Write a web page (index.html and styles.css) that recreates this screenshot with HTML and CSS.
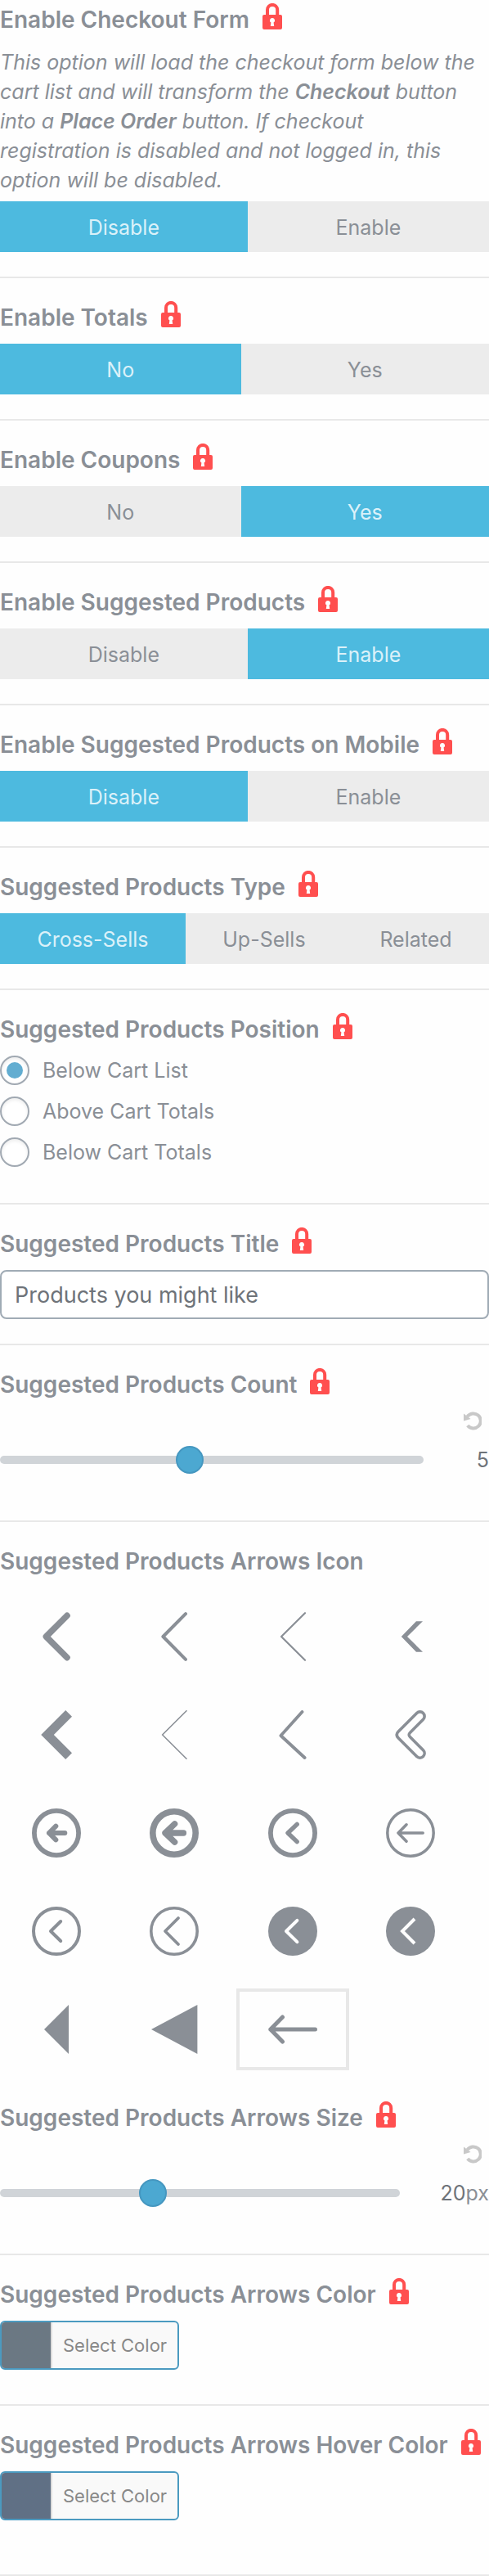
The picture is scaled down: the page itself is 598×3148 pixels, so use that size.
FILE: index.html
```
<!DOCTYPE html>
<html lang="en">
<head>
<meta charset="utf-8">
<meta name="viewport" content="width=device-width, initial-scale=1">
<title>Cart options</title>
<link rel="stylesheet" href="styles.css">
</head>
<body>
<svg class="sprite" aria-hidden="true">
  <symbol id="lock" viewBox="0 0 24 32">
    <path d="M6 15V8a6.1 6.1 0 0 1 12.2 0v7" fill="none" stroke="currentColor" stroke-width="4"/>
    <path fill="currentColor" fill-rule="evenodd" d="M2 14h20a2 2 0 0 1 2 2v14a2 2 0 0 1-2 2H2a2 2 0 0 1-2-2V16a2 2 0 0 1 2-2zM12 18a3 3 0 0 0-1.6 5.6L9.8 28h4.4l-.6-4.4A3 3 0 0 0 12 18z"/>
  </symbol>
  <symbol id="reset" viewBox="0 0 22 24">
    <path d="M4.5 7.2A9 9 0 1 1 4.8 18" fill="none" stroke="currentColor" stroke-width="4"/>
    <path d="M0 3.5V12.4L8.6 10Z" fill="currentColor"/>
  </symbol>
</svg>
<main class="options">
  <section class="option option--first">
    <h2 class="option__title">Enable Checkout Form <svg class="lock"><use href="#lock"/></svg></h2>
    <p class="option__desc">This option will load the checkout form below the cart list and will transform the <strong>Checkout</strong> button into a <strong>Place Order</strong> button. If checkout registration is disabled and not logged in, this option will be disabled.</p>
    <div class="segments" role="group" aria-label="Enable Checkout Form">
      <button class="segment segment--on" type="button" aria-pressed="true">Disable</button>
      <button class="segment" type="button" aria-pressed="false">Enable</button>
    </div>
  </section>

  <section class="option">
    <h2 class="option__title">Enable Totals <svg class="lock"><use href="#lock"/></svg></h2>
    <div class="segments" role="group" aria-label="Enable Totals">
      <button class="segment segment--on" type="button" aria-pressed="true">No</button>
      <button class="segment" type="button" aria-pressed="false">Yes</button>
    </div>
  </section>

  <section class="option">
    <h2 class="option__title">Enable Coupons <svg class="lock"><use href="#lock"/></svg></h2>
    <div class="segments" role="group" aria-label="Enable Coupons">
      <button class="segment" type="button" aria-pressed="false">No</button>
      <button class="segment segment--on" type="button" aria-pressed="true">Yes</button>
    </div>
  </section>

  <section class="option">
    <h2 class="option__title">Enable Suggested Products <svg class="lock"><use href="#lock"/></svg></h2>
    <div class="segments" role="group" aria-label="Enable Suggested Products">
      <button class="segment" type="button" aria-pressed="false">Disable</button>
      <button class="segment segment--on" type="button" aria-pressed="true">Enable</button>
    </div>
  </section>

  <section class="option">
    <h2 class="option__title">Enable Suggested Products on Mobile <svg class="lock"><use href="#lock"/></svg></h2>
    <div class="segments" role="group" aria-label="Enable Suggested Products on Mobile">
      <button class="segment segment--on" type="button" aria-pressed="true">Disable</button>
      <button class="segment" type="button" aria-pressed="false">Enable</button>
    </div>
  </section>

  <section class="option">
    <h2 class="option__title">Suggested Products Type <svg class="lock"><use href="#lock"/></svg></h2>
    <div class="segments" role="group" aria-label="Suggested Products Type">
      <button class="segment segment--on" type="button" aria-pressed="true">Cross-Sells</button>
      <button class="segment" type="button" aria-pressed="false">Up-Sells</button>
      <button class="segment" type="button" aria-pressed="false">Related</button>
    </div>
  </section>

  <section class="option">
    <h2 class="option__title">Suggested Products Position <svg class="lock"><use href="#lock"/></svg></h2>
    <label class="radio"><input class="radio__input" type="radio" name="position" checked>Below Cart List</label>
    <label class="radio"><input class="radio__input" type="radio" name="position">Above Cart Totals</label>
    <label class="radio"><input class="radio__input" type="radio" name="position">Below Cart Totals</label>
  </section>

  <section class="option">
    <h2 class="option__title"><label for="sp-title">Suggested Products Title</label> <svg class="lock"><use href="#lock"/></svg></h2>
    <input class="textbox" id="sp-title" type="text" value="Products you might like">
  </section>

  <section class="option option--slider">
    <h2 class="option__title"><label for="sp-count">Suggested Products Count</label> <svg class="lock"><use href="#lock"/></svg></h2>
    <button class="reset" type="button" aria-label="Reset"><svg class="reset__icon"><use href="#reset"/></svg></button>
    <div class="slider">
      <input class="slider__range" id="sp-count" type="range" min="1" max="10" value="5">
      <output class="slider__value" for="sp-count"><span class="slider__number">5</span></output>
    </div>
  </section>

  <section class="option option--joined">
    <h2 class="option__title">Suggested Products Arrows Icon</h2>
    <div class="picker" role="group" aria-label="Suggested Products Arrows Icon">
      <button class="pick" type="button" aria-label="Arrow 1"><svg class="arrow" viewBox="0 0 60 60"><path class="round" stroke-width="7.6" d="M43 4.4 17.4 30 43 55.6"/></svg></button>
      <button class="pick" type="button" aria-label="Arrow 2"><svg class="arrow" viewBox="0 0 60 60"><path class="round" stroke-width="4" d="M44 2.2 16.4 30 44 57.8"/></svg></button>
      <button class="pick" type="button" aria-label="Arrow 3"><svg class="arrow" viewBox="0 0 60 60"><path class="round" stroke-width="2.2" d="M45 1.2 16 30 45 58.8"/></svg></button>
      <button class="pick" type="button" aria-label="Arrow 4"><svg class="arrow" viewBox="0 0 60 60"><path class="solid" d="M18.8 30 37 11.2H45L26 30 45 48.8H37Z"/></svg></button>

      <button class="pick" type="button" aria-label="Arrow 5"><svg class="arrow" viewBox="0 0 60 60"><path class="solid" d="M11.2 30 41.2 0 49 7.8 26.8 30 49 52.2 41.2 60Z"/></svg></button>
      <button class="pick" type="button" aria-label="Arrow 6"><svg class="arrow" viewBox="0 0 60 60"><path class="round" stroke-width="1.6" d="M45 .8 15.6 30 45 59.2"/></svg></button>
      <button class="pick" type="button" aria-label="Arrow 7"><svg class="arrow" viewBox="0 0 60 60"><path class="round" stroke-width="3.8" d="M41.5 2 15.4 31 44.6 58"/></svg></button>
      <button class="pick" type="button" aria-label="Arrow 8"><svg class="arrow" viewBox="0 0 60 60"><path class="round" stroke-width="3.6" d="M37.7 3.5 15.2 26Q11.2 30 15.2 34L37.7 56.5A5.5 5.5 0 0 0 45.5 48.7L29.6 32.8Q26.8 30 29.6 27.2L45.5 11.3A5.5 5.5 0 0 0 37.7 3.5Z"/></svg></button>

      <button class="pick" type="button" aria-label="Arrow 9"><svg class="arrow" viewBox="0 0 60 60"><circle class="round" cx="30" cy="30" r="27.1" stroke-width="5.8"/><path class="round" stroke-width="6" d="M29.3 21.6 21 30 29.3 38.4M21 30H40.3"/></svg></button>
      <button class="pick" type="button" aria-label="Arrow 10"><svg class="arrow" viewBox="0 0 60 60"><circle class="round" cx="30" cy="30" r="26.2" stroke-width="7.6"/><path class="round" stroke-width="7.4" d="M30.6 18.8 19 30 30.6 41.2M19 30H41.4"/></svg></button>
      <button class="pick" type="button" aria-label="Arrow 11"><svg class="arrow" viewBox="0 0 60 60"><circle class="round" cx="30" cy="30" r="27.1" stroke-width="5.8"/><path class="round" stroke-width="5.4" d="M35.2 19.4 24 30 35.2 40.6"/></svg></button>
      <button class="pick" type="button" aria-label="Arrow 12"><svg class="arrow" viewBox="0 0 60 60"><circle class="round" cx="30" cy="30" r="28.2" stroke-width="3.5"/><path class="round" stroke-width="3.5" d="M25 19.8 15 30 25 40.2M15 30H45.2"/></svg></button>

      <button class="pick" type="button" aria-label="Arrow 13"><svg class="arrow" viewBox="0 0 60 60"><circle class="round" cx="30" cy="30" r="28" stroke-width="4"/><path class="round" stroke-width="4" d="M35.2 18 23 30 35.2 42"/></svg></button>
      <button class="pick" type="button" aria-label="Arrow 14"><svg class="arrow" viewBox="0 0 60 60"><circle class="round" cx="30" cy="30" r="28.2" stroke-width="3.6"/><path class="round" stroke-width="3.8" d="M35 14 19 30 35 46"/></svg></button>
      <button class="pick" type="button" aria-label="Arrow 15"><svg class="arrow" viewBox="0 0 60 60"><circle class="solid" cx="30" cy="30" r="30"/><path class="round cut" stroke-width="4" d="M35.4 16.8 22 30 35.4 43.2"/></svg></button>
      <button class="pick" type="button" aria-label="Arrow 16"><svg class="arrow" viewBox="0 0 60 60"><circle class="solid" cx="30" cy="30" r="30"/><path class="cut" stroke-width="4" d="M35 15 20 30 35 45"/></svg></button>

      <button class="pick" type="button" aria-label="Arrow 17"><svg class="arrow" viewBox="0 0 60 60"><path class="solid" d="M15 30 45 0V60Z"/></svg></button>
      <button class="pick" type="button" aria-label="Arrow 18"><svg class="arrow" viewBox="0 0 60 60"><path class="solid" d="M2 30 58.4 0V60Z"/></svg></button>
      <button class="pick pick--on" type="button" aria-label="Arrow 19" aria-pressed="true"><svg class="arrow" viewBox="0 0 60 60"><path class="round" stroke-width="5" d="M17.5 15 2.8 30 17.5 45M2.8 30H57.5"/></svg></button>
    </div>
  </section>

  <section class="option option--slider">
    <h2 class="option__title"><label for="sp-size">Suggested Products Arrows Size</label> <svg class="lock"><use href="#lock"/></svg></h2>
    <button class="reset" type="button" aria-label="Reset"><svg class="reset__icon"><use href="#reset"/></svg></button>
    <div class="slider">
      <input class="slider__range" id="sp-size" type="range" min="8" max="40" value="20">
      <output class="slider__value" for="sp-size"><span class="slider__number">20</span>px</output>
    </div>
  </section>

  <section class="option option--color">
    <h2 class="option__title">Suggested Products Arrows Color <svg class="lock"><use href="#lock"/></svg></h2>
    <button class="color" type="button"><span class="color__swatch color__swatch--base"></span><span class="color__text">Select Color</span></button>
  </section>

  <section class="option option--last">
    <h2 class="option__title">Suggested Products Arrows Hover Color <svg class="lock"><use href="#lock"/></svg></h2>
    <button class="color" type="button"><span class="color__swatch color__swatch--hover"></span><span class="color__text">Select Color</span></button>
  </section>
</main>
</body>
</html>
```
FILE: styles.css
```
* { box-sizing: border-box; }

body {
  margin: 0;
  background: #fefefe;
  color: #8a8f96;
  font-family: Inter, Roboto, "Liberation Sans", sans-serif;
  font-size: 25px;
  line-height: 36px;
}

button, input { font: inherit; color: inherit; margin: 0; }
button { border: 0; padding: 0; background: none; cursor: pointer; }

.sprite { display: none; }

.option {
  padding: 28px 0 30px;
  border-bottom: 2px solid #e8e8e8;
}
.option--first { padding-top: 4px; }
.option--slider { padding-bottom: 56px; }
.option--joined { padding-bottom: 10px; border-bottom: 0; }
.option--color { padding-bottom: 42px; }
.option--last { padding-bottom: 66px; }

.option__title {
  display: flex;
  align-items: flex-start;
  gap: 16px;
  margin: 0 0 12px;
  font-size: 28px;
  font-weight: 600;
  line-height: 40px;
  white-space: nowrap;
}
.lock { flex: none; width: 24px; height: 32px; color: #ff4f4f; }

.option__desc {
  margin: 0 0 8px;
  padding: 2px 14px 0 0;
  font-style: italic;
}
.option__desc strong { font-weight: 600; }

.segments { display: flex; }
.segment {
  flex: 1 1 auto;
  height: 62px;
  padding-top: 2px;
  background: #ececec;
}
.segment--on { background: #4dbadf; color: #dbf1f9; }

.radio {
  display: flex;
  align-items: center;
  gap: 16px;
  margin-bottom: 14px;
}
.radio__input {
  appearance: none;
  display: grid;
  place-items: center;
  width: 36px;
  height: 36px;
  border: 2px solid #a1a9b2;
  border-radius: 50%;
  background: #fff;
  box-shadow: inset 0 2px 4px rgba(0, 0, 0, .08);
}
.radio__input:checked::before {
  content: "";
  width: 20px;
  height: 20px;
  border-radius: 50%;
  background: #62add1;
}

.textbox {
  display: block;
  width: 100%;
  height: 60px;
  padding: 0 16px;
  border: 2px solid #a0abb5;
  border-radius: 8px;
  background: #fff;
  color: #6e7379;
  font-size: 27px;
}

.reset {
  display: block;
  height: 24px;
  margin-left: auto;
  margin-right: 9px;
  color: #c8c8c8;
}
.reset__icon { display: block; width: 22px; height: 24px; }

.slider {
  display: flex;
  align-items: center;
  gap: 50px;
  margin-top: 18px;
}
.slider__range {
  appearance: none;
  flex: 1;
  min-width: 0;
  height: 10px;
  border-radius: 5px;
  background: #d0d4d8;
}
.slider__range::-webkit-slider-thumb {
  appearance: none;
  width: 34px;
  height: 34px;
  border: 2px solid #4597c0;
  border-radius: 50%;
  background: #4ca8d1;
}
.slider__value { display: flex; }
.slider__number {
  min-width: 30px;
  color: #6e7379;
  text-align: right;
}

.picker {
  display: grid;
  grid-template-columns: repeat(4, 23%);
  gap: 20px 7px;
  margin-top: 22px;
}
.pick {
  display: grid;
  place-items: center;
  height: 100px;
  border: 4px solid transparent;
}
.pick--on { border-color: #e8e8e8; }
.arrow {
  display: block;
  width: 60px;
  height: 60px;
  fill: none;
  stroke: #8a8f96;
}
.round { stroke-linecap: round; stroke-linejoin: round; }
.solid { fill: #8a8f96; stroke: none; }
.cut { stroke: #fefefe; }

.color {
  display: flex;
  height: 60px;
  overflow: hidden;
  border: 2px solid #4b9ac0;
  border-radius: 6px;
  background: #f9f9f9;
}
.color__swatch { width: 62px; border-right: 2px solid #dcdcdc; }
.color__swatch--base { background: #6b7883; }
.color__swatch--hover { background: #607085; }
.color__text {
  padding: 0 13px;
  color: #888;
  font-size: 22px;
  line-height: 56px;
}
```
